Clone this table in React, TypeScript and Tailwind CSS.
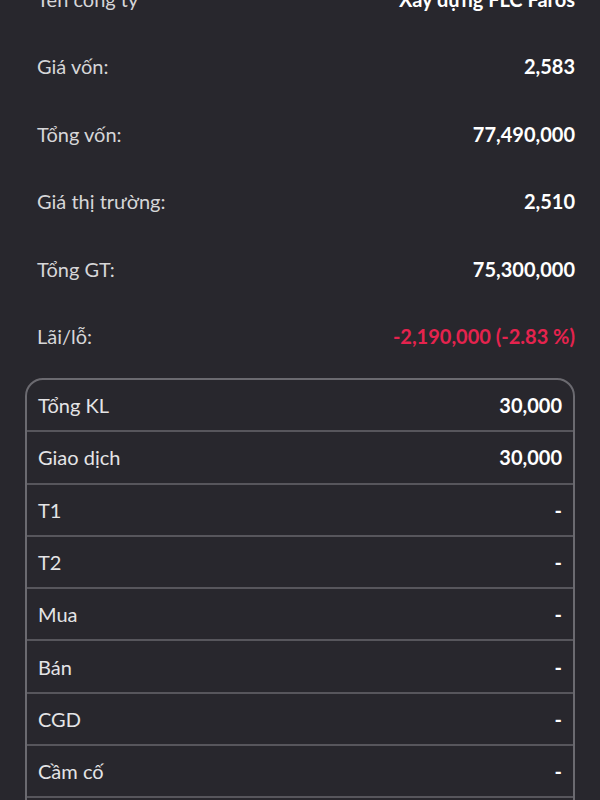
const summary = [
  { label: "Tên công ty", value: "Xây dựng FLC Faros" },
  { label: "Giá vốn:", value: "2,583" },
  { label: "Tổng vốn:", value: "77,490,000" },
  { label: "Giá thị trường:", value: "2,510" },
  { label: "Tổng GT:", value: "75,300,000" },
  { label: "Lãi/lỗ:", value: "-2,190,000 (-2.83 %)", loss: true },
];

const volumes = [
  { label: "Tổng KL", value: "30,000" },
  { label: "Giao dịch", value: "30,000" },
  { label: "T1", value: "-" },
  { label: "T2", value: "-" },
  { label: "Mua", value: "-" },
  { label: "Bán", value: "-" },
  { label: "CGD", value: "-" },
  { label: "Cầm cố", value: "-" },
  { label: "Khác", value: "-" },
];

export default function App() {
  return (
    <div
      className="h-[800px] w-[600px] overflow-hidden bg-[#28272d] text-[20px]"
      style={{ fontFamily: "Lato, 'Open Sans', sans-serif" }}
    >
      {/* Position summary */}
      <div className="-mt-[35px] flex flex-col">
        {summary.map((row) => (
          <div key={row.label} className="flex h-[67.5px] items-center justify-between pl-[37px] pr-[25px]">
            <span className="text-[#d6d6d8]">{row.label}</span>
            <span className={row.loss ? "font-bold text-[#e5234e]" : "font-bold text-white"}>{row.value}</span>
          </div>
        ))}
      </div>

      {/* Volume breakdown */}
      <div className="mx-[25px] mt-[8px] rounded-t-[18px] border-2 border-[#6b6a70]">
        {volumes.map((row) => (
          <div
            key={row.label}
            className="flex h-[52.3px] items-center justify-between border-b-2 border-[#57565c] px-[11px]"
          >
            <span className="text-[#e4e4e6]">{row.label}</span>
            <span className="font-bold text-white">{row.value}</span>
          </div>
        ))}
      </div>
    </div>
  );
}
